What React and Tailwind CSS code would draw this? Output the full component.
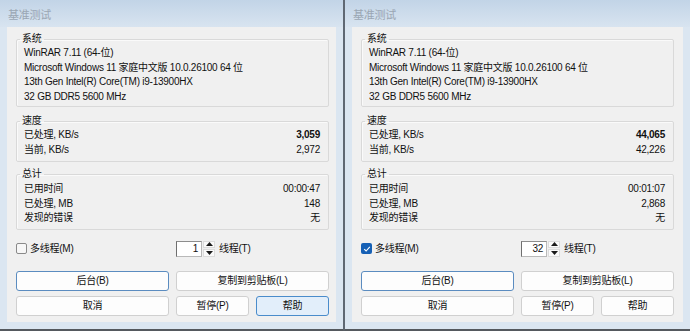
import React from 'react';

const windows = [
  {
    processed: '3,059',
    current: '2,972',
    elapsed: '00:00:47',
    mb: '148',
    multi: false,
    threads: '1',
    helpHover: true,
    side: 'left',
  },
  {
    processed: '44,065',
    current: '42,226',
    elapsed: '00:01:07',
    mb: '2,868',
    multi: true,
    threads: '32',
    helpHover: false,
    side: 'right',
  },
];

function Group({ title, children, bottom }) {
  return (
    <fieldset
      className={`border border-[#d9d9d9] rounded-[2px] pl-[7px] pr-[8px] shadow-[inset_1px_1px_0_#fafafa] ${bottom}`}
    >
      <legend className="-ml-[4px] px-[2px] leading-[12px]">{title}</legend>
      {children}
    </fieldset>
  );
}

function Row({ label, value, bold }) {
  return (
    <div className="flex justify-between leading-[14.5px]">
      <span>{label}</span>
      <span className={bold ? 'font-bold' : ''}>{value}</span>
    </div>
  );
}

function Btn({ children, variant }) {
  const look =
    variant === 'default'
      ? 'bg-[#fdfdfd] border-[#5b8cc0]'
      : variant === 'hover'
        ? 'bg-[#e2eefa] border-[#4a8ccb]'
        : 'bg-[#fdfdfd] border-[#d0d0d0]';
  return (
    <button className={`h-[20px] border rounded-[3px] flex items-center justify-center text-[#111] ${look}`}>
      {children}
    </button>
  );
}

function Checkbox({ checked }) {
  if (checked) {
    return (
      <span className="w-[11px] h-[11px] rounded-[2px] bg-[#1660b5] flex items-center justify-center">
        <svg width="8" height="8" viewBox="0 0 8 8">
          <path d="M1.2 4.2 L3.1 6 L6.8 1.8" fill="none" stroke="#fff" strokeWidth="1.1" />
        </svg>
      </span>
    );
  }
  return <span className="w-[11px] h-[11px] rounded-[2px] border border-[#8a8a8a] bg-[#f7f7f7]" />;
}

function Spin({ value }) {
  return (
    <div className="flex items-center">
      <div className="w-[26px] h-[16px] bg-white border border-[#b9b9b9] border-l-[#6f6f6f] border-t-[#8d8d8d] flex items-center justify-end pr-[3px]">
        {value}
      </div>
      <div className="ml-[1px] w-[12px] h-[16px] flex flex-col gap-[1px]">
        <div className="flex-1 flex items-center justify-center border border-[#dcdcdc] bg-[#fafafa]">
          <svg width="7" height="4" viewBox="0 0 7 4">
            <path d="M0 4 L3.5 0 L7 4 Z" fill="#1a1a1a" />
          </svg>
        </div>
        <div className="flex-1 flex items-center justify-center border border-[#dcdcdc] bg-[#fafafa]">
          <svg width="7" height="4" viewBox="0 0 7 4">
            <path d="M0 0 L7 0 L3.5 4 Z" fill="#1a1a1a" />
          </svg>
        </div>
      </div>
      <span className="ml-[4px]">线程(T)</span>
    </div>
  );
}

function BenchWindow({ w }) {
  const outer =
    w.side === 'left'
      ? 'w-[344px] border-r border-[#5f6873]'
      : 'w-[346px] border-l border-[#5f6873]';
  return (
    <div className={`${outer} h-[331px] flex flex-col bg-[#dbe6f1] border-b-2 border-b-[#55595e]`}>
      <div className="h-[27px] shrink-0 flex items-center pl-[8px] pt-[3px] text-[11px] text-[#9aa6b3] bg-gradient-to-b from-[#c2d4e7] to-[#d8e4f0]">
        基准测试
      </div>
      <div className="mx-[7px] h-[295px] bg-[#f0f0f0] pl-[9px] pt-[6px]">
        <div className="w-[313px] flex flex-col">
          <Group title="系统" bottom="pb-[2px]">
            <div className="pt-[1px]">
              <div className="leading-[14.5px]">WinRAR 7.11 (64-位)</div>
              <div className="leading-[14.5px]">Microsoft Windows 11 家庭中文版 10.0.26100 64 位</div>
              <div className="leading-[14.5px]">13th Gen Intel(R) Core(TM) i9-13900HX</div>
              <div className="leading-[14.5px]">32 GB DDR5 5600 MHz</div>
            </div>
          </Group>
          <div className="mt-[8px]">
            <Group title="速度" bottom="pb-[4px]">
              <div className="pt-[1px]">
                <Row label="已处理, KB/s" value={w.processed} bold />
                <Row label="当前, KB/s" value={w.current} />
              </div>
            </Group>
          </div>
          <div className="mt-[6px]">
            <Group title="总计" bottom="pb-[3px]">
              <div className="pt-[2px]">
                <Row label="已用时间" value={w.elapsed} />
                <Row label="已处理, MB" value={w.mb} />
                <Row label="发现的错误" value="无" />
              </div>
            </Group>
          </div>
          <div className="mt-[11px] h-[16px] grid grid-cols-[153px_1fr] gap-[7px] items-center">
            <div className="flex items-center gap-[3px]">
              <Checkbox checked={w.multi} />
              <span>多线程(M)</span>
            </div>
            <Spin value={w.threads} />
          </div>
          <div className="mt-[14px] grid grid-cols-2 gap-[7px]">
            <Btn variant="default">后台(B)</Btn>
            <Btn>复制到剪贴板(L)</Btn>
          </div>
          <div className="mt-[5px] grid grid-cols-[153px_1fr_1fr] gap-[7px]">
            <Btn>取消</Btn>
            <Btn>暂停(P)</Btn>
            <Btn variant={w.helpHover ? 'hover' : undefined}>帮助</Btn>
          </div>
        </div>
      </div>
    </div>
  );
}

export default function App() {
  return (
    <div className="w-[690px] h-[331px] flex overflow-hidden bg-[#dbe6f1] text-[10px] tracking-[-0.25px] text-[#111] font-['Liberation_Sans','Noto_Sans_CJK_SC',sans-serif]">
      {windows.map((w) => (
        <BenchWindow key={w.side} w={w} />
      ))}
    </div>
  );
}
